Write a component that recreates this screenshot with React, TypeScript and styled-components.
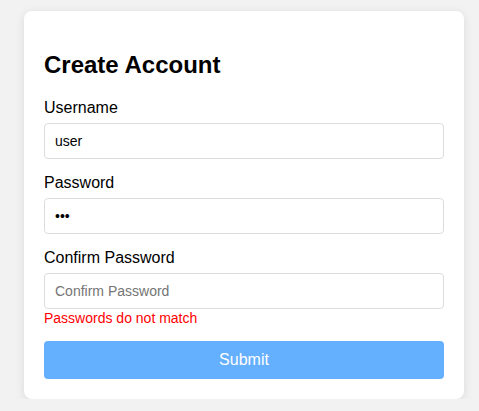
import React, { useState } from 'react';
import styled, { createGlobalStyle } from 'styled-components';

const GlobalStyle = createGlobalStyle`
  body {
    margin: 0;
    padding: 11px 0 0 24px;
    background: #f2f2f2;
    font-family: "Liberation Sans", Arial, sans-serif;
  }
`

const Card = styled.form`
  width: 400px;
  padding: 20px;
  background: #fff;
  border-radius: 8px;
  box-shadow: 0 2px 10px rgba(0, 0, 0, 0.1);
`

const Title = styled.h2`
  font-size: 24px;
  font-weight: bold;
  margin: 20px 0 20px;
  color: #000;
`

const FormGroup = styled.div`
  margin-bottom: 15px;
`

const Label = styled.label`
  display: block;
  font-size: 16px;
  margin-bottom: 6px;
  color: #000;
`

const Input = styled.input`
  display: block;
  box-sizing: border-box;
  width: 100%;
  height: 36px;
  padding: 0 10px;
  font-family: "Liberation Sans", Arial, sans-serif;
  font-size: 14px;
  color: #000;
  border: 1px solid #ddd;
  border-radius: 4px;
  outline: none;

  &::placeholder {
    color: #757575;
  }
`

const ErrorText = styled.div`
  color: red;
  font-size: 14px;
  margin: 1px 0 2px;
`

const SubmitButton = styled.button`
  display: block;
  width: 100%;
  padding: 10px;
  font-family: "Liberation Sans", Arial, sans-serif;
  font-size: 16px;
  color: #fff;
  background: #007bff;
  opacity: 0.6;
  border: none;
  border-radius: 4px;
  cursor: not-allowed;
`

const App: React.FC = () => {
  const [username, setUsername] = useState('user');
  const [password, setPassword] = useState('abc');
  const [confirm, setConfirm] = useState('');
  const mismatch = password !== confirm;

  return <>
    <GlobalStyle />
    <Card onSubmit={e => e.preventDefault()}>
      <Title>Create Account</Title>
      <FormGroup>
        <Label>Username</Label>
        <Input value={username} onChange={e => setUsername(e.target.value)} />
      </FormGroup>
      <FormGroup>
        <Label>Password</Label>
        <Input type="password" value={password} onChange={e => setPassword(e.target.value)} />
      </FormGroup>
      <FormGroup>
        <Label>Confirm Password</Label>
        <Input type="password" placeholder="Confirm Password" value={confirm} onChange={e => setConfirm(e.target.value)} />
        {mismatch && <ErrorText>Passwords do not match</ErrorText>}
      </FormGroup>
      <SubmitButton type="submit" disabled={mismatch}>Submit</SubmitButton>
    </Card>
  </>
}

export default App;
